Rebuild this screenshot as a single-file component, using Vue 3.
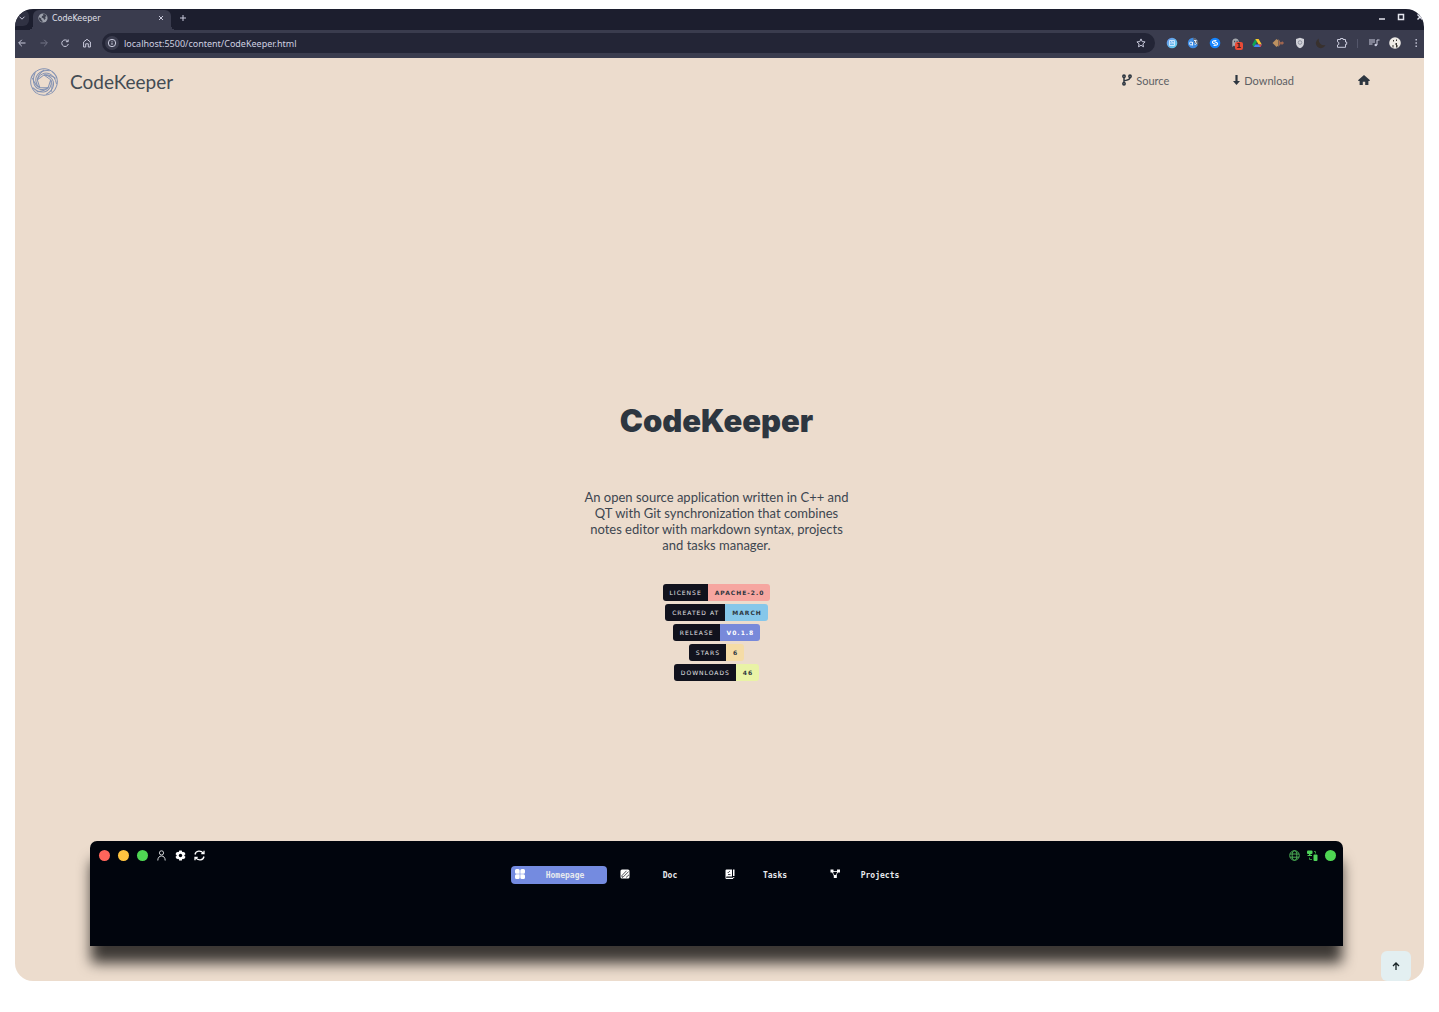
<script setup>
const badges = [
  { label: 'LICENSE', value: 'APACHE-2.0', tone: 'red' },
  { label: 'CREATED AT', value: 'MARCH', tone: 'sky' },
  { label: 'RELEASE', value: 'V0.1.8', tone: 'indigo' },
  { label: 'STARS', value: '6', tone: 'sand' },
  { label: 'DOWNLOADS', value: '46', tone: 'lime' },
]
const turns = [0, 72, 144, 216, 288]
</script>

<template>
  <div class="browser">
    <header class="tab-strip">
      <button class="tab-search" aria-label="Search tabs">
        <svg width="8" height="8" viewBox="0 0 8 8"><path d="M1.5 2.7 4 5.2l2.5-2.5" class="line" /></svg>
      </button>
      <div class="tab">
        <svg width="10" height="10" viewBox="0 0 10 10">
          <circle cx="5" cy="5" r="4.6" fill="#9da1ac" />
          <path d="M1 4.2 3.3 5.6v1.2l1.2 1v1.3A4.4 4.4 0 0 1 1 4.2ZM5 1l2.2.3 1.4 1.9-1.5.6.6 1.6L6.2 7 5.4 5.2 3.6 4.6 4 3l1.4-.5Z" fill="#3e4150" />
        </svg>
        <span class="tab-title">CodeKeeper</span>
        <button aria-label="Close tab">
          <svg width="8" height="8" viewBox="0 0 8 8"><path d="m2 2 4 4m0-4L2 6" class="line" /></svg>
        </button>
      </div>
      <button class="new-tab" aria-label="New tab">
        <svg width="8" height="8" viewBox="0 0 8 8"><path d="M4 1v6M1 4h6" class="line" /></svg>
      </button>
      <div class="window-controls">
        <button aria-label="Minimize"><svg width="8" height="8" viewBox="0 0 8 8"><path d="M1 6h6" class="bold-line" /></svg></button>
        <button aria-label="Maximize"><svg width="8" height="8" viewBox="0 0 8 8"><path d="M1.5 1.5h5v5h-5z" class="bold-line" /></svg></button>
        <button aria-label="Close window"><svg width="8" height="8" viewBox="0 0 8 8"><path d="m1.5 1.5 5 5m0-5-5 5" class="bold-line" /></svg></button>
      </div>
    </header>

    <div class="toolbar">
      <nav class="history" aria-label="Browser navigation">
        <button aria-label="Back"><svg width="12" height="12" viewBox="0 0 12 12"><path d="M9.5 6H3M5.8 2.8 2.6 6l3.2 3.2" class="line" /></svg></button>
        <button aria-label="Forward" class="faded"><svg width="12" height="12" viewBox="0 0 12 12"><path d="M2.5 6H9M6.2 2.8 9.4 6 6.2 9.2" class="line" /></svg></button>
        <button aria-label="Reload"><svg width="12" height="12" viewBox="0 0 12 12"><path d="M8.8 4.3A3.3 3.3 0 1 0 9.3 7M9.2 2.5v2.2H6.9" class="line" /></svg></button>
        <button aria-label="Home"><svg width="12" height="12" viewBox="0 0 12 12"><path d="M2.6 10V5L6 2.3 9.4 5v5H7.3V6.8H4.7V10Z" class="line" /></svg></button>
      </nav>
      <div class="address">
        <button class="site-info" aria-label="Site information">
          <svg width="10" height="10" viewBox="0 0 10 10"><circle cx="5" cy="5" r="3.7" class="line" /><path d="M5 4.6v2.3M5 2.8v1" class="line" /></svg>
        </button>
        <input type="text" aria-label="Address" value="localhost:5500/content/CodeKeeper.html" />
        <button aria-label="Bookmark this page">
          <svg width="10" height="10" viewBox="0 0 10 10"><path d="m5 .9 1.2 2.7 2.9.3-2.2 2 .6 2.9L5 7.3 2.5 8.8l.6-2.9-2.2-2 2.9-.3Z" class="line" /></svg>
        </button>
      </div>
      <div class="extensions">
        <button aria-label="Reader"><svg width="12" height="12" viewBox="0 0 12 12"><defs><linearGradient id="reader" x2="1" y2="1"><stop stop-color="#648ee8" /><stop offset="1" stop-color="#68d9ee" /></linearGradient></defs><circle cx="6" cy="6" r="5.3" fill="url(#reader)" /><path d="M3.5 3.5h5v5h-5zM4.5 3.5l3 2.5M3.5 6h5" fill="none" stroke="#d4eaff" stroke-width=".9" /></svg></button>
        <button aria-label="Translate"><svg width="12" height="12" viewBox="0 0 12 12"><circle cx="6" cy="6" r="5.2" fill="#3d8be3" /><path d="M6 .8A5.2 5.2 0 0 1 10.8 8L7.5 6Z" fill="#62646c" /><circle cx="4" cy="6.5" r="1.5" fill="none" stroke="#dfefff" /><path d="M5.5 5v3.5M7 3.5h2.3L8.1 5.2c2.4.2 1.5 2.8-.6 2" fill="none" stroke="#e8f3ff" /></svg></button>
        <button aria-label="Shazam"><svg width="12" height="12" viewBox="0 0 12 12"><circle cx="6" cy="6" r="5.3" fill="#1685ff" /><path d="M6.2 7.2 4.1 6.2c-1.2-.9-.5-2.2.8-2.5L7 3.5M5.8 4.8l2.1 1c1.2.9.5 2.2-.8 2.5L5 8.5" fill="none" stroke="#fff" stroke-width="1.1" stroke-linecap="round" /></svg></button>
        <button aria-label="Tracker blocker" class="has-count"><svg width="12" height="12" viewBox="0 0 12 12"><path d="M2.3 10V4.5C2.3.5 8.8.5 8.8 4.5V10L7.2 8.5 5.6 10 4 8.6Z" fill="#a5a7ad" /><path d="M4 3.7h1.2v1.6H4zm2.5 0h1.2v1.6H6.5z" fill="#454752" /></svg><span class="count">1</span></button>
        <button aria-label="Drive"><svg width="12" height="12" viewBox="0 0 12 12"><path d="M4.3 2 1.2 7.5 2.8 10 6 4.8Z" fill="#0fa451" /><path d="M4.3 2h3.3l3.2 5.5H7.6Z" fill="#fcc92c" /><path d="M4.3 7.5h6.5L9.4 10H2.8Z" fill="#4285f4" /><path d="M7.6 7.5h3.2L9.4 10Z" fill="#ea4335" /></svg></button>
        <button aria-label="Audio"><svg width="12" height="12" viewBox="0 0 12 12"><path d="m.5 6 4-4 1 1 1-.8V9.8l-1-.8-1 1Z" fill="#bd9160" /><path d="M7.5 3.5v5M9 5v2.5M7 6h5M10.3 4.5v3" stroke="#a9694f" stroke-width="1.1" /></svg></button>
        <button aria-label="Shield"><svg width="12" height="12" viewBox="0 0 12 12"><path d="M6 .8 10 2v3.7C10 8.5 8.3 10.4 6 11.3 3.7 10.4 2 8.5 2 5.7V2Z" fill="#d0d1d8" /><circle cx="6" cy="5.5" r="1.8" fill="none" stroke="#9093a0" /></svg></button>
        <button aria-label="Dark mode"><svg width="12" height="12" viewBox="0 0 12 12"><path d="M4 1.5A5 5 0 1 0 10.5 8 5.2 5.2 0 0 1 4 1.5Z" fill="#38312e" /></svg></button>
        <button aria-label="Extensions"><svg width="12" height="12" viewBox="0 0 12 12"><path d="M1.5 2.5H4.5V1.5H7V2.5H9.5V5H10.7V7.3H9.5V10.3H1.5V8L2.8 7.3V5.5L1.5 4.8Z" class="line" /></svg></button>
      </div>
      <span class="separator"></span>
      <div class="browser-menu">
        <button aria-label="Media"><svg width="12" height="12" viewBox="0 0 12 12"><path d="M1 3h6M1 5h6M1 7h3.5M9 8V3h2.5" class="line" /><circle cx="7.8" cy="8" r="1.3" fill="#c9cadc" /></svg></button>
        <button aria-label="Profile"><svg width="12" height="12" viewBox="0 0 12 12"><circle cx="6" cy="6" r="5.8" fill="#eeebe6" /><path d="M4 3h1v1.5H4zm3-.5h1V4H7zM6.5 6H8v2h.5v2.5H7V8h-.5zM3.5 8h1v2.5h-1z" fill="#35332f" /></svg></button>
        <button aria-label="Menu"><svg width="12" height="12" viewBox="0 0 12 12"><path d="M5.5 2h1.4v1.4H5.5zm0 3.3h1.4v1.4H5.5zm0 3.3h1.4V10H5.5z" fill="#c9cadc" /></svg></button>
      </div>
    </div>

    <div class="page">
      <header class="site-header">
        <a class="brand" href="#">
          <svg width="28" height="28" viewBox="-14 -14 28 28">
            <g v-for="turn in turns" :key="turn" :transform="`rotate(${turn})`">
              <path d="M0-7 6.7-2.2C8.500 1 8.500 5 7 10" />
              <path d="M-6.700-2.200C-5-7.500 1-10.500 6-8 9.500-6.200 11.500-3 12.500 2" />
              <path d="M-7.800-10.700C-3-14.100 3-14.100 7.800-10.700" />
            </g>
          </svg>
          <span>CodeKeeper</span>
        </a>
        <nav class="site-nav">
          <a href="#source">
            <svg width="10" height="12" viewBox="0 0 10 12"><g fill="none" stroke="#2d3640" stroke-width="1.5"><circle cx="2" cy="2.3" r="1.2" /><circle cx="8" cy="2.3" r="1.2" /><circle cx="2" cy="9.7" r="1.2" /><path d="M2 3.5v5M8 3.5C8 6.3 5.5 6 2 6.7" /></g></svg>
            <span>Source</span>
          </a>
          <a href="#download">
            <svg width="7" height="10" viewBox="0 0 7 10"><path d="M2.4 0h2.2v6H7L3.5 10 0 6h2.4Z" fill="#2d3640" /></svg>
            <span>Download</span>
          </a>
          <a href="#home" aria-label="Home">
            <svg width="12" height="10" viewBox="0 0 12 10"><path d="M6 0 12 5.2l-.6.7h-1V10H7.2V6.8H4.8V10H1.6V5.9h-1L0 5.2Z" fill="#2d3640" /></svg>
          </a>
        </nav>
      </header>

      <main class="hero">
        <h1>CodeKeeper</h1>
        <p>An open source application written in C++ and QT with Git synchronization that combines notes editor with markdown syntax, projects and tasks manager.</p>
        <ul class="badges">
          <li v-for="badge in badges" :key="badge.label">
            <span class="badge-label">{{ badge.label }}</span><strong :class="badge.tone">{{ badge.value }}</strong>
          </li>
        </ul>
      </main>

      <section class="preview" aria-label="Application preview">
        <div class="app-bar">
          <div class="app-group">
            <i class="dot close"></i><i class="dot minimize"></i><i class="dot online"></i>
            <svg width="11" height="11" viewBox="0 0 11 11"><g fill="none" stroke="#d4d6d8"><circle cx="5.5" cy="2.9" r="2.1" /><path d="M1.8 10.5c0-2.8 1.5-4.5 3.7-4.5s3.7 1.7 3.7 4.5" /></g></svg>
            <svg width="11" height="11" viewBox="0 0 11 11"><g fill="#fff"><rect v-for="turn in [0, 60, 120]" :key="turn" x="4" y=".5" width="3" height="10" rx=".5" :transform="`rotate(${turn} 5.5 5.5)`" /><circle cx="5.5" cy="5.5" r="3.9" /></g><circle cx="5.5" cy="5.5" r="1.7" fill="#01050d" /></svg>
            <svg width="11" height="11" viewBox="0 0 11 11"><path d="M1 4.5C1.8.5 7 0 9.3 3.3M10 .8v2.8H7.3M10 6.5c-.8 4-6 4.5-8.3 1.2M1 10.2V7.4h2.7" fill="none" stroke="#fff" stroke-width="1.3" /></svg>
          </div>
          <div class="app-group status">
            <svg width="11" height="11" viewBox="0 0 11 11"><g fill="none" stroke="#4aad54"><circle cx="5.5" cy="5.5" r="4.8" /><ellipse cx="5.5" cy="5.5" rx="2.3" ry="4.8" /><path d="M1 4h9M1 7.2h9" /></g></svg>
            <svg width="11" height="11" viewBox="0 0 11 11"><g fill="#4fd35a"><rect y=".5" width="5.5" height="3.5" rx="1" /><path d="M2 4h1.5v1H5v1H.5V5H2z" /><rect x="6.5" y="4.5" width="4" height="6.5" rx="1" /></g><path d="M7 1.5h1.5V3.5M2.5 7.5v2h2.5" fill="none" stroke="#36943e" /></svg>
            <i class="dot online"></i>
          </div>
        </div>
        <nav class="app-tabs">
          <button class="active">
            <svg width="10" height="10" viewBox="0 0 10 10"><path d="M1.5 0h1.7q1.5 0 1.5 1.5v3.2H1.5Q0 4.7 0 3.2V1.5Q0 0 1.5 0ZM6.8 0h1.7Q10 0 10 1.5v1.7q0 1.5-1.5 1.5H5.3V1.5Q5.3 0 6.8 0ZM1.5 5.3h3.2v3.2q0 1.5-1.5 1.5H1.5Q0 10 0 8.5V6.8q0-1.5 1.5-1.5ZM5.3 5.3h3.2q1.5 0 1.5 1.5v1.7q0 1.5-1.5 1.5H6.8q-1.5 0-1.5-1.5Z" fill="#fff" /></svg>
            <span>Homepage</span>
          </button>
          <button>
            <svg width="10" height="10" viewBox="0 0 10 10"><rect x=".5" y=".5" width="9" height="9" rx="1.5" fill="#fff" /><path d="m2 6.5 4.5-4.7M3 8.2l5.7-5.7M2 6.5v1.7h1M6 8.5l3-2.7" fill="none" stroke="#01050d" stroke-width=".7" /></svg>
            <span>Doc</span>
          </button>
          <button>
            <svg width="10" height="10" viewBox="0 0 10 10"><path d="M1.5.5H7v7H2q-1 0-1 .7 0 .5 1 .5h6V10H1.5Q.5 10 .5 9V1.5q0-1 1-1ZM8 .5h1.5V7H8zm0 7.5h1.5L8.7 9.5z" fill="#fff" /><path d="M2.5 3 3.2 3.7 5 2M3 5.5h2.5" fill="none" stroke="#01050d" stroke-width=".7" /></svg>
            <span>Tasks</span>
          </button>
          <button>
            <svg width="10" height="10" viewBox="0 0 10 10"><path d="M2 2.5h6M2 2.5l3 5.5 3-5.5" fill="none" stroke="#fff" stroke-width=".8" /><path d="M.5.5h3v3h-3zm6.5 0h3v3H7zM3.8 6h3v3h-3z" fill="#fff" /></svg>
            <span>Projects</span>
          </button>
        </nav>
      </section>

      <button class="to-top" aria-label="Back to top">
        <svg width="8" height="8" viewBox="0 0 8 8"><path d="M4 8V1M1 4l3-3 3 3" fill="none" stroke="#182326" stroke-width="1.3" /></svg>
      </button>
    </div>
  </div>
</template>

<style>
body {
  margin: 0;
  background: #fff;
}
</style>

<style scoped>
* {
  box-sizing: border-box;
}
button {
  display: flex;
  align-items: center;
  justify-content: center;
  padding: 0;
  border: 0;
  background: none;
  color: inherit;
  font: inherit;
}
svg {
  display: block;
  flex: none;
}
.line {
  fill: none;
  stroke: #c9cadc;
  stroke-width: 1;
}
.bold-line {
  fill: none;
  stroke: #e4e5ee;
  stroke-width: 1.5;
}
.browser {
  display: flex;
  flex-direction: column;
  min-height: calc(100vh - 40px);
  margin: 9px 15px 31px;
  border-radius: 18px;
  overflow: hidden;
  font-family: "DejaVu Sans", sans-serif;
  font-size: 8px;
  color: #e0e1ec;
}
.tab-strip {
  display: flex;
  align-items: flex-start;
  height: 21px;
  background: #1c1e2e;
}
.tab-search {
  width: 14px;
  height: 16px;
  margin: 1px 4px 0 0;
  border-radius: 0 6px 6px 0;
  background: #303243;
}
.tab {
  position: relative;
  display: flex;
  align-items: center;
  gap: 4px;
  width: 138px;
  height: 20px;
  margin-top: 1px;
  padding: 0 6px 4px 5px;
  border-radius: 6px 6px 0 0;
  background: #3a3c4e;
}
.tab::before,
.tab::after {
  content: "";
  position: absolute;
  bottom: 0;
  width: 5px;
  height: 5px;
}
.tab::before {
  right: 100%;
  background: radial-gradient(circle at 0 0, transparent 5px, #3a3c4e 5px);
}
.tab::after {
  left: 100%;
  background: radial-gradient(circle at 100% 0, transparent 5px, #3a3c4e 5px);
}
.tab-title {
  flex: 1;
}
.new-tab {
  margin: 5px 0 0 8px;
}
.window-controls {
  display: flex;
  margin: 4px -5px 0 auto;
}
.window-controls button {
  width: 19px;
}
.toolbar {
  display: flex;
  align-items: center;
  height: 28px;
  padding: 0 2px 2px 1px;
  background: #3a3c4e;
}
.history,
.extensions,
.browser-menu {
  display: flex;
  flex: none;
  justify-content: space-between;
}
.history {
  width: 77px;
}
.faded {
  opacity: 0.4;
}
.address {
  display: flex;
  flex: 1;
  align-items: center;
  gap: 5px;
  height: 20px;
  margin: 0 11px 0 9px;
  padding: 0 9px 0 3px;
  border-radius: 10px;
  background: #232536;
}
.site-info {
  width: 14px;
  height: 14px;
  border-radius: 7px;
  background: #3a3c4e;
}
.address input {
  flex: 1;
  min-width: 0;
  padding: 0;
  border: 0;
  outline: 0;
  background: none;
  color: #cfd0e0;
  font-family: "Noto Sans", sans-serif;
  font-size: 9px;
}
.extensions {
  width: 182px;
}
.has-count {
  position: relative;
}
.count {
  position: absolute;
  left: 5px;
  top: 5px;
  width: 8px;
  height: 8px;
  border-radius: 2px;
  background: #ea4a36;
  color: #43201f;
  font-size: 7px;
  font-weight: 700;
  line-height: 8px;
}
.separator {
  width: 1px;
  height: 9px;
  margin: 0 10px 0 9px;
  background: #54566a;
}
.browser-menu {
  width: 54px;
}
.page {
  position: relative;
  display: flex;
  flex: 1;
  flex-direction: column;
  padding-bottom: 35px;
  background: #ecdccd;
  color: #2d3640;
  font-family: Lato, sans-serif;
}
.site-header {
  display: flex;
  align-items: center;
  justify-content: space-between;
  height: 48px;
  padding: 0 54px 0 15px;
}
a {
  display: flex;
  align-items: center;
  color: inherit;
  text-decoration: none;
}
.brand {
  gap: 12px;
  color: #434b53;
  font-size: 19px;
  line-height: 24px;
}
.brand path {
  fill: none;
  stroke: #8392b3;
  stroke-width: 1;
}
.site-nav {
  display: flex;
  gap: 64px;
  margin-bottom: 4px;
  font-size: 11px;
}
.site-nav a {
  gap: 4px;
}
.site-nav span {
  color: #5c6064;
}
.hero {
  display: flex;
  flex: 1;
  flex-direction: column;
  align-items: center;
  justify-content: flex-end;
  padding: 48px 6px 160px 0;
}
h1 {
  margin: 0 0 48px;
  font-family: Inter, sans-serif;
  font-size: 31px;
  font-weight: 900;
  line-height: 40px;
}
.hero p {
  width: 274px;
  margin: 0 0 31px;
  color: #3d4650;
  font-size: 13px;
  line-height: 16px;
  text-align: center;
}
.badges {
  display: flex;
  flex-direction: column;
  align-items: center;
  gap: 3px;
  margin: 0;
  padding: 0;
  list-style: none;
  font-family: "DejaVu Sans", sans-serif;
  font-size: 6px;
  line-height: 17px;
  letter-spacing: 1px;
}
.badges li {
  display: flex;
  border-radius: 3px;
  overflow: hidden;
}
.badges span,
.badges strong {
  padding: 0 6px 0 7px;
}
.badge-label {
  background: #11121d;
  color: #e4e4e8;
}
.red {
  background: #f6a6a0;
}
.sky {
  background: #86c7ea;
}
.indigo {
  background: #7889da;
  color: #fff;
}
.sand {
  background: #f5dca6;
}
.lime {
  background: #e9f3a6;
}
.preview {
  height: 105px;
  margin: 0 81px 0 75px;
  padding: 9px 7px 0 9px;
  border-radius: 7px 7px 0 0;
  background: #01050d;
  box-shadow: 0 18px 14px -1px rgba(0, 0, 0, 0.75);
  color: #e8eaee;
}
.app-bar,
.app-group {
  display: flex;
  justify-content: space-between;
}
.app-group {
  gap: 8px;
}
.status {
  gap: 7px;
}
.dot {
  width: 11px;
  height: 11px;
  border-radius: 50%;
}
.close {
  background: #ff655b;
}
.minimize {
  background: #ffc440;
}
.online {
  background: #4fd653;
}
.app-tabs {
  display: flex;
  justify-content: center;
  gap: 9px;
  margin: 5px 2px 0 0;
  font-family: "DejaVu Sans Mono", monospace;
  font-weight: 700;
}
.app-tabs button {
  width: 96px;
  height: 18px;
  padding: 0 2px 2px 4px;
  border-radius: 4px;
}
.app-tabs span {
  flex: 1;
  padding-top: 2px;
}
.app-tabs .active {
  background: #748be0;
}
.to-top {
  position: absolute;
  right: 13px;
  bottom: 0;
  width: 30px;
  height: 30px;
  border-radius: 6px;
  background: #e3eff1;
}
</style>
